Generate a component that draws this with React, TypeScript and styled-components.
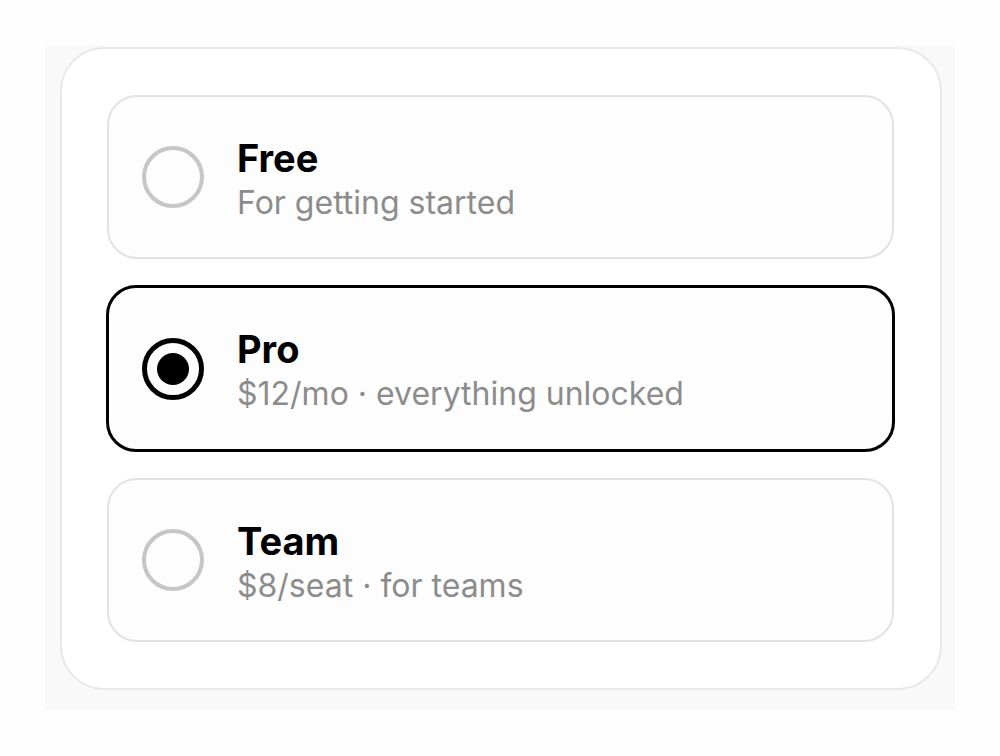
import React, { useState } from "react";
import styled, { createGlobalStyle } from "styled-components";

const Global = createGlobalStyle`
  html, body { margin: 0; padding: 0; background: #fefefe; }
  body { font-family: Inter, "Noto Sans", sans-serif; -webkit-font-smoothing: antialiased; }
`;

const Page = styled.div`
  width: 1000px;
  height: 756px;
  padding: 45px;
  box-sizing: border-box;
`;

const Backdrop = styled.div`
  width: 910px;
  height: 665px;
  box-sizing: border-box;
  padding: 2px 13px 20px 15px;
  background: #f9f9f9;
`;

const Card = styled.div`
  box-sizing: border-box;
  width: 882px;
  height: 643px;
  background: #ffffff;
  border: 2px solid #e8e8e8;
  border-radius: 44px;
  padding: 46px 46px 46px 45px;
  display: flex;
  flex-direction: column;
  gap: 26px;
`;

const Option = styled.label<{ $selected: boolean }>`
  box-sizing: border-box;
  height: ${(p) => (p.$selected ? 167 : 164)}px;
  margin: ${(p) => (p.$selected ? "0 -1px" : "0")};
  border: ${(p) => (p.$selected ? "3px solid #000" : "2px solid #e2e2e2")};
  border-radius: 30px;
  background: #fdfdfd;
  display: flex;
  align-items: center;
  gap: 33px;
  padding-left: 33px;
  cursor: pointer;
`;

const Radio = styled.span<{ $selected: boolean }>`
  box-sizing: border-box;
  flex: none;
  width: 62px;
  height: 62px;
  border-radius: 50%;
  border: ${(p) => (p.$selected ? "5px solid #000" : "4px solid #c6c6c6")};
  display: flex;
  align-items: center;
  justify-content: center;
  &::after {
    content: "";
    display: ${(p) => (p.$selected ? "block" : "none")};
    width: 32px;
    height: 32px;
    border-radius: 50%;
    background: #000;
  }
`;

const Texts = styled.div`
  display: flex;
  flex-direction: column;
  gap: 3px;
  padding-top: 4px;
`;

const Title = styled.div`
  font-size: 38px;
  line-height: 44px;
  font-weight: 700;
  color: #000;
`;

const Subtitle = styled.div`
  font-size: 32px;
  line-height: 40px;
  font-weight: 400;
  color: #8c8c8c;
`;

const plans = [
  { id: "free", title: "Free", sub: "For getting started" },
  { id: "pro", title: "Pro", sub: "$12/mo · everything unlocked" },
  { id: "team", title: "Team", sub: "$8/seat · for teams" },
];

export default function App() {
  const [sel, setSel] = useState("pro");
  return (
    <>
      <Global />
      <Page>
        <Backdrop>
          <Card>
            {plans.map((p) => (
              <Option key={p.id} $selected={sel === p.id} onClick={() => setSel(p.id)}>
                <Radio $selected={sel === p.id} />
                <Texts>
                  <Title>{p.title}</Title>
                  <Subtitle>{p.sub}</Subtitle>
                </Texts>
              </Option>
            ))}
          </Card>
        </Backdrop>
      </Page>
    </>
  );
}
